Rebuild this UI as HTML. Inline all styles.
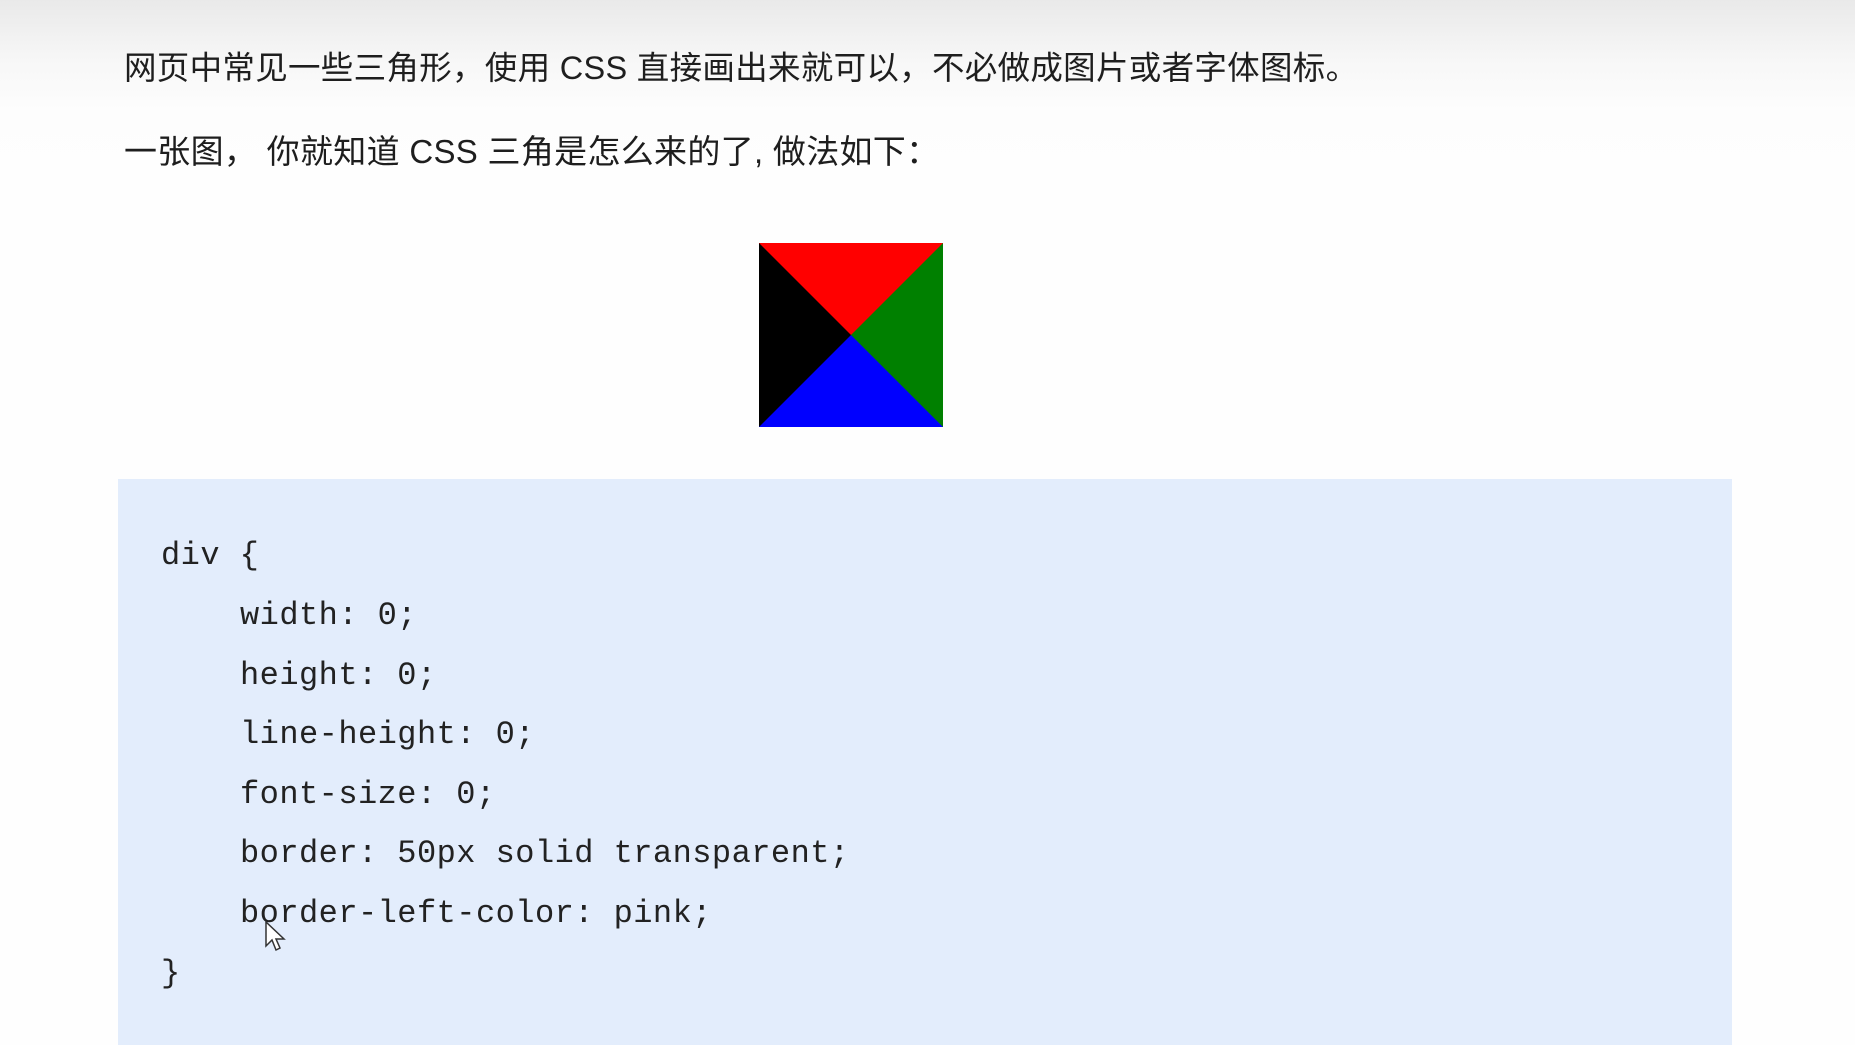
<!DOCTYPE html>
<html><head><meta charset="utf-8"><style>
html,body{margin:0;padding:0;}
body{width:1855px;height:1045px;position:relative;overflow:hidden;background:linear-gradient(#e9e9e9 0px,#f7f7f7 60px,#fdfdfd 110px,#fefefe 200px);font-family:"Liberation Sans","Noto Sans CJK SC",sans-serif;color:#1e1e1e;}
.t{position:absolute;left:124px;font-size:32.5px;white-space:nowrap;line-height:40px;letter-spacing:0.3px;}
.sq{position:absolute;left:759px;top:243px;width:0;height:0;border-style:solid;border-width:92px;border-color:#f00 #008000 #00f #000;}
.code{position:absolute;left:118px;top:479px;width:1614px;height:566px;background:#e3edfc;}
.l{position:absolute;font-family:"Liberation Mono",monospace;font-size:32px;color:#222;white-space:pre;line-height:40px;letter-spacing:0.46px;}
</style></head><body>
<div class="t" style="top:48px">网页中常见一些三角形，使用 CSS 直接画出来就可以，不必做成图片或者字体图标。</div>
<div class="t" style="top:132px;font-size:33px">一张图， 你就知道 CSS 三角是怎么来的了, 做法如下：</div>
<div class="sq"></div>
<div class="code"></div>
<div class="l" style="left:161px;top:536px">div {</div>
<div class="l" style="left:240px;top:596px">width: 0;</div>
<div class="l" style="left:240px;top:656px">height: 0;</div>
<div class="l" style="left:240px;top:715px">line-height: 0;</div>
<div class="l" style="left:240px;top:775px">font-size: 0;</div>
<div class="l" style="left:240px;top:834px">border: 50px solid transparent;</div>
<div class="l" style="left:240px;top:894px">border-left-color: pink;</div>
<div class="l" style="left:161px;top:954px">}</div>
<svg style="position:absolute;left:264px;top:920px" width="22" height="34" viewBox="0 0 22 34"><path d="M2 2 L2 26 L8 20 L12 30 L16 28 L12 19 L20 19 Z" fill="#fff" stroke="#333" stroke-width="1.5"/></svg>
</body></html>
